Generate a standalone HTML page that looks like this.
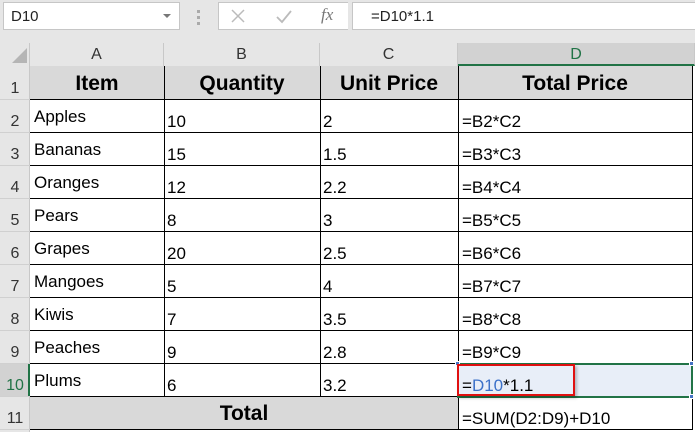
<!DOCTYPE html>
<html><head><meta charset="utf-8"><style>
*{margin:0;padding:0;box-sizing:border-box}
body{width:695px;height:432px;overflow:hidden;background:#fff;font-family:"Liberation Sans",Arial,sans-serif;position:relative}
.a{position:absolute}
.t{position:absolute;font-size:17px;line-height:18px;color:#000;white-space:nowrap}
.h{position:absolute;font-size:21px;font-weight:bold;line-height:24px;text-align:center}
.rn{position:absolute;left:0;width:30px;font-size:16px;line-height:18px;color:#333;text-align:center}
.ch{position:absolute;top:43px;height:23px;font-size:16px;line-height:23px;color:#333;text-align:center;border-right:1px solid #c8c8c8}
.hl{position:absolute;left:30px;width:662px;height:1px;background:#000}
.vl{position:absolute;width:1px;background:#000}
.rl{position:absolute;left:0;width:30px;height:1px;background:#d0d0d0}
</style></head><body>
<div class="a" style="left:0;top:0;width:695px;height:43px;background:#e6e6e6"></div>
<div class="a" style="left:3px;top:2px;width:177px;height:28px;background:#fff;border:1px solid #c6c6c6"></div>
<div class="t" style="left:11px;top:8px;font-size:15px;color:#222">D10</div>
<div class="a" style="left:163px;top:14px;width:0;height:0;border-left:4px solid transparent;border-right:4px solid transparent;border-top:4px solid #777"></div>
<div class="a" style="left:197px;top:10px;width:3px;height:3px;background:#aaa"></div>
<div class="a" style="left:197px;top:16px;width:3px;height:3px;background:#aaa"></div>
<div class="a" style="left:197px;top:22px;width:3px;height:3px;background:#aaa"></div>
<div class="a" style="left:218px;top:2px;width:130px;height:28px;background:#fff;border:1px solid #c6c6c6;border-right:none"></div>
<svg class="a" style="left:230px;top:8px" width="16" height="16"><path d="M2 2L14 14M14 2L2 14" stroke="#bbb" stroke-width="1.5"/></svg>
<svg class="a" style="left:275px;top:8px" width="18" height="16"><path d="M2 9L7 14L16 3" stroke="#bbb" stroke-width="1.8" fill="none"/></svg>
<div class="t" style="left:321px;top:6px;font-family:'Liberation Serif',serif;font-style:italic;font-size:17px;color:#777">fx</div>
<div class="a" style="left:352px;top:2px;width:343px;height:28px;background:#fff;border:1px solid #c6c6c6;border-right:none"></div>
<div class="t" style="left:371px;top:8px;font-size:15px;color:#222">=D10*1.1</div>
<div class="a" style="left:0;top:43px;width:30px;height:23px;background:#e6e6e6;border-right:1px solid #c8c8c8"></div>
<div class="a" style="left:12px;top:48px;width:0;height:0;border-left:15px solid transparent;border-bottom:15px solid #b5b5b5"></div>
<div class="ch" style="left:30px;width:134px;background:#e6e6e6">A</div>
<div class="ch" style="left:164px;width:156px;background:#e6e6e6">B</div>
<div class="ch" style="left:320px;width:138px;background:#e6e6e6">C</div>
<div class="ch" style="left:458px;width:237px;background:#d2d2d2;color:#217346;border-bottom:2px solid #217346">D</div>
<div class="a" style="left:0;top:66px;width:30px;height:366px;background:#e6e6e6;border-right:1px solid #c8c8c8"></div>
<div class="a" style="left:0;top:364px;width:30px;height:33px;background:#d2d2d2;border-right:2px solid #217346"></div>
<div class="rn" style="top:80px">1</div>
<div class="rn" style="top:113px">2</div>
<div class="rn" style="top:146px">3</div>
<div class="rn" style="top:179px">4</div>
<div class="rn" style="top:212px">5</div>
<div class="rn" style="top:245px">6</div>
<div class="rn" style="top:278px">7</div>
<div class="rn" style="top:311px">8</div>
<div class="rn" style="top:344px">9</div>
<div class="rn" style="top:377px;color:#217346">10</div>
<div class="rn" style="top:410px">11</div>
<div class="rl" style="top:99px"></div><div class="rl" style="top:132px"></div><div class="rl" style="top:165px"></div><div class="rl" style="top:198px"></div><div class="rl" style="top:231px"></div><div class="rl" style="top:264px"></div><div class="rl" style="top:297px"></div><div class="rl" style="top:330px"></div><div class="rl" style="top:363px"></div><div class="rl" style="top:396px"></div><div class="rl" style="top:429px"></div>
<div class="a" style="left:30px;top:66px;width:662px;height:33px;background:#d9d9d9"></div>
<div class="a" style="left:30px;top:397px;width:428px;height:33px;background:#d9d9d9"></div>
<div class="a" style="left:458px;top:364px;width:234px;height:33px;background:#e8eef8"></div>
<div class="hl" style="top:99px"></div><div class="hl" style="top:132px"></div><div class="hl" style="top:165px"></div><div class="hl" style="top:198px"></div><div class="hl" style="top:231px"></div><div class="hl" style="top:264px"></div><div class="hl" style="top:297px"></div><div class="hl" style="top:330px"></div><div class="hl" style="top:363px"></div><div class="hl" style="top:396px"></div><div class="hl" style="top:429px"></div>
<div class="vl" style="left:164px;top:66px;height:331px"></div>
<div class="vl" style="left:320px;top:66px;height:331px"></div>
<div class="vl" style="left:458px;top:66px;height:364px"></div>
<div class="vl" style="left:692px;top:66px;height:364px"></div>
<div class="h" style="left:30px;top:72px;width:134px">Item</div>
<div class="h" style="left:164px;top:72px;width:156px">Quantity</div>
<div class="h" style="left:320px;top:72px;width:138px">Unit Price</div>
<div class="h" style="left:458px;top:72px;width:234px">Total Price</div>
<div class="t" style="left:34px;top:108px">Apples</div><div class="t" style="left:167px;top:113px">10</div><div class="t" style="left:323px;top:113px">2</div><div class="t" style="left:462px;top:113px">=B2*C2</div>
<div class="t" style="left:34px;top:141px">Bananas</div><div class="t" style="left:167px;top:146px">15</div><div class="t" style="left:323px;top:146px">1.5</div><div class="t" style="left:462px;top:146px">=B3*C3</div>
<div class="t" style="left:34px;top:174px">Oranges</div><div class="t" style="left:167px;top:179px">12</div><div class="t" style="left:323px;top:179px">2.2</div><div class="t" style="left:462px;top:179px">=B4*C4</div>
<div class="t" style="left:34px;top:207px">Pears</div><div class="t" style="left:167px;top:212px">8</div><div class="t" style="left:323px;top:212px">3</div><div class="t" style="left:462px;top:212px">=B5*C5</div>
<div class="t" style="left:34px;top:240px">Grapes</div><div class="t" style="left:167px;top:245px">20</div><div class="t" style="left:323px;top:245px">2.5</div><div class="t" style="left:462px;top:245px">=B6*C6</div>
<div class="t" style="left:34px;top:273px">Mangoes</div><div class="t" style="left:167px;top:278px">5</div><div class="t" style="left:323px;top:278px">4</div><div class="t" style="left:462px;top:278px">=B7*C7</div>
<div class="t" style="left:34px;top:306px">Kiwis</div><div class="t" style="left:167px;top:311px">7</div><div class="t" style="left:323px;top:311px">3.5</div><div class="t" style="left:462px;top:311px">=B8*C8</div>
<div class="t" style="left:34px;top:339px">Peaches</div><div class="t" style="left:167px;top:344px">9</div><div class="t" style="left:323px;top:344px">2.8</div><div class="t" style="left:462px;top:344px">=B9*C9</div>
<div class="t" style="left:34px;top:372px">Plums</div><div class="t" style="left:167px;top:377px">6</div><div class="t" style="left:323px;top:377px">3.2</div>
<div class="a" style="left:457px;top:363px;width:236px;height:35px;border:2px solid #217346"></div>
<div class="a" style="left:455px;top:361px;width:5px;height:5px;background:#4472c4;border:1px solid #fff"></div>
<div class="a" style="left:689px;top:361px;width:5px;height:5px;background:#4472c4;border:1px solid #fff"></div>
<div class="a" style="left:689px;top:394px;width:5px;height:5px;background:#4472c4;border:1px solid #fff"></div>
<div class="a" style="left:457px;top:364px;width:118px;height:32px;border:2px solid #e01010;box-shadow:2px 2px 3px rgba(0,0,0,0.25)"></div>
<div class="t" style="left:462px;top:377px">=<span style="color:#3d72c9">D10</span>*1.1</div>
<div class="h" style="left:30px;top:402px;width:428px">Total</div>
<div class="t" style="left:462px;top:410px">=SUM(D2:D9)+D10</div>
</body></html>
